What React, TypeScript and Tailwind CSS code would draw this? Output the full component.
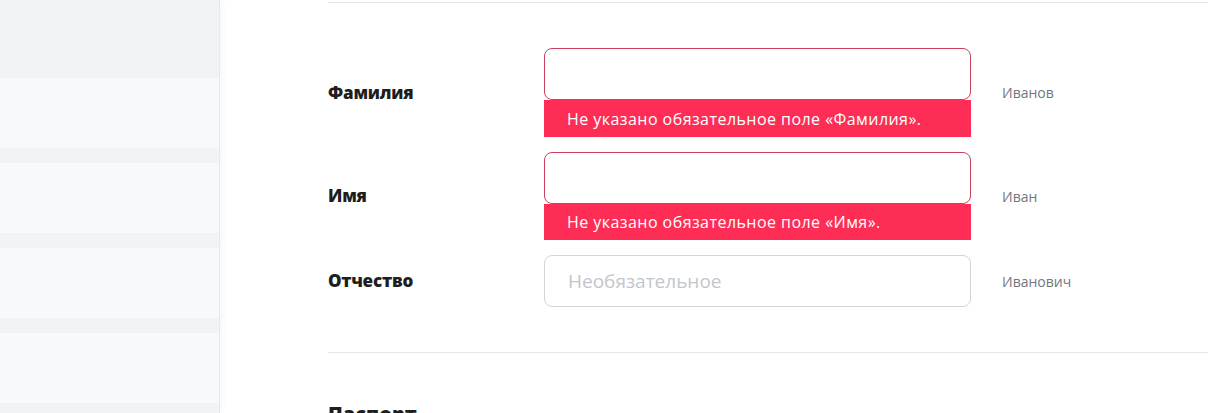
import React from "react";

const font = { fontFamily: '"Open Sans", "Noto Sans", sans-serif' };

function SideRow() {
  return <div className="h-[70px] shrink-0 bg-[#f7f9fb]" />;
}

function Field({
  label,
  error,
  placeholder,
  example,
  short,
}: {
  label: string;
  error?: string;
  placeholder?: string;
  example: string;
  short?: boolean;
}) {
  return (
    <div className="flex items-center shrink-0">
      <div className="w-[216px] text-[17px] font-extrabold text-[#1e1e1e] tracking-[-0.2px]">{label}</div>
      <div className="w-[427px] flex flex-col">
        <div
          className={
            "h-[52px] rounded-lg border bg-white flex items-center pl-[23px] " +
            (error ? "border-[#c8415a]" : "border-[#d3d5d9]")
          }
        >
          {placeholder ? (
            <span className="text-[19px] text-[#c3c6cc]">{placeholder}</span>
          ) : null}
        </div>
        {error ? (
          <div
            className={
              (short ? "h-[36px] " : "h-[37px] ") +
              "bg-[#fd2d55] text-white text-[16px] tracking-[0.45px] flex items-center pl-[23px]"
            }
          >
            {error}
          </div>
        ) : null}
      </div>
      <div className="ml-[31px] text-[14px] text-[#72767d]">{example}</div>
    </div>
  );
}

export default function App() {
  return (
    <div className="flex w-[1215px] h-[413px] overflow-hidden bg-white" style={font}>
      <aside className="w-[220px] shrink-0 bg-[#f1f3f7] border-r border-[#e4e8f0] shadow-[2px_0_6px_rgba(0,0,0,0.04)] flex flex-col gap-[15px] pt-[78px]">
        <SideRow />
        <SideRow />
        <SideRow />
        <SideRow />
      </aside>
      <main className="pl-[108px] w-[988px] flex flex-col">
        <div className="mt-[2px] h-px shrink-0 bg-[#e2e2e2]" />
        <div className="pt-[45px] pb-[45px] shrink-0 flex flex-col gap-[15px]">
          <Field
            label="Фамилия"
            error="Не указано обязательное поле «Фамилия»."
            example="Иванов"
          />
          <Field label="Имя" error="Не указано обязательное поле «Имя»." example="Иван" short />
          <Field label="Отчество" placeholder="Необязательное" example="Иванович" />
        </div>
        <div className="h-px shrink-0 bg-[#e6e6e6]" />
        <div className="mt-[46px] shrink-0 text-[20px] font-extrabold text-[#1e1e1e]">Паспорт</div>
      </main>
    </div>
  );
}
